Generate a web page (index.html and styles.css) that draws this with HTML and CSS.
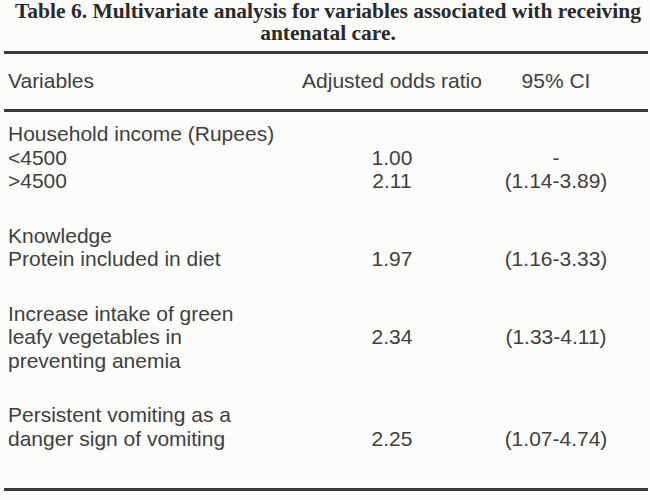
FILE: index.html
```html
<!DOCTYPE html>
<html lang="en">
<head>
<meta charset="utf-8">
<title>Table 6</title>
<link rel="stylesheet" href="styles.css">
</head>
<body>
<div class="page">
  <h1 class="caption">Table 6. Multivariate analysis for variables associated with receiving<br>antenatal care.</h1>
  <div class="table">
    <div class="grid head">
      <div class="c1">Variables</div>
      <div class="c2">Adjusted odds ratio</div>
      <div class="c3">95% CI</div>
    </div>
    <div class="body">
      <div class="grid group">
        <div class="c1">Household income (Rupees)</div>
        <div class="c1 r2">&lt;4500</div>
        <div class="c2 r2">1.00</div>
        <div class="c3 r2">-</div>
        <div class="c1 r3">&gt;4500</div>
        <div class="c2 r3">2.11</div>
        <div class="c3 r3">(1.14-3.89)</div>
      </div>
      <div class="grid group">
        <div class="c1">Knowledge</div>
        <div class="c1 r2">Protein included in diet</div>
        <div class="c2 r2">1.97</div>
        <div class="c3 r2">(1.16-3.33)</div>
      </div>
      <div class="grid group">
        <div class="c1 span3">Increase intake of green<br>leafy vegetables in<br>preventing anemia</div>
        <div class="c2 r2">2.34</div>
        <div class="c3 r2">(1.33-4.11)</div>
      </div>
      <div class="grid group">
        <div class="c1 span2">Persistent vomiting as a<br>danger sign of vomiting</div>
        <div class="c2 r2">2.25</div>
        <div class="c3 r2">(1.07-4.74)</div>
      </div>
    </div>
  </div>
</div>
</body>
</html>
```

FILE: styles.css
```css
body {
  margin: 0;
  background: #fcfcfa;
  color: #404040;
  font-family: "Liberation Sans", Arial, sans-serif;
}

.page {
  width: 644px;
  margin-left: 4px;
}

.caption {
  margin: 0;
  padding-left: 4px;
  font-family: "Liberation Serif", "Times New Roman", serif;
  font-weight: bold;
  font-size: 21.5px;
  line-height: 22px;
  text-align: center;
  color: #2a2a2a;
}

.table {
  margin-top: 7px;
  border-top: 3px solid #383838;
  border-bottom: 3px solid #383838;
}

.grid {
  display: grid;
  grid-template-columns: 296px 184px 144px;
  grid-auto-rows: 23.5px;
  font-size: 21px;
  line-height: 23.5px;
}

.head {
  padding: 15px 0 16.5px;
  border-bottom: 3px solid #383838;
}

.body {
  padding: 10px 0 38px;
}

.group + .group {
  margin-top: 31px;
}

.c1 {
  grid-column: 1;
  padding-left: 4px;
  white-space: nowrap;
}

.c2 {
  grid-column: 2;
  text-align: center;
}

.c3 {
  grid-column: 3;
  text-align: center;
}

.r2 { grid-row: 2; }
.r3 { grid-row: 3; }
.span2 { grid-row: 1 / span 2; }
.span3 { grid-row: 1 / span 3; }
```
